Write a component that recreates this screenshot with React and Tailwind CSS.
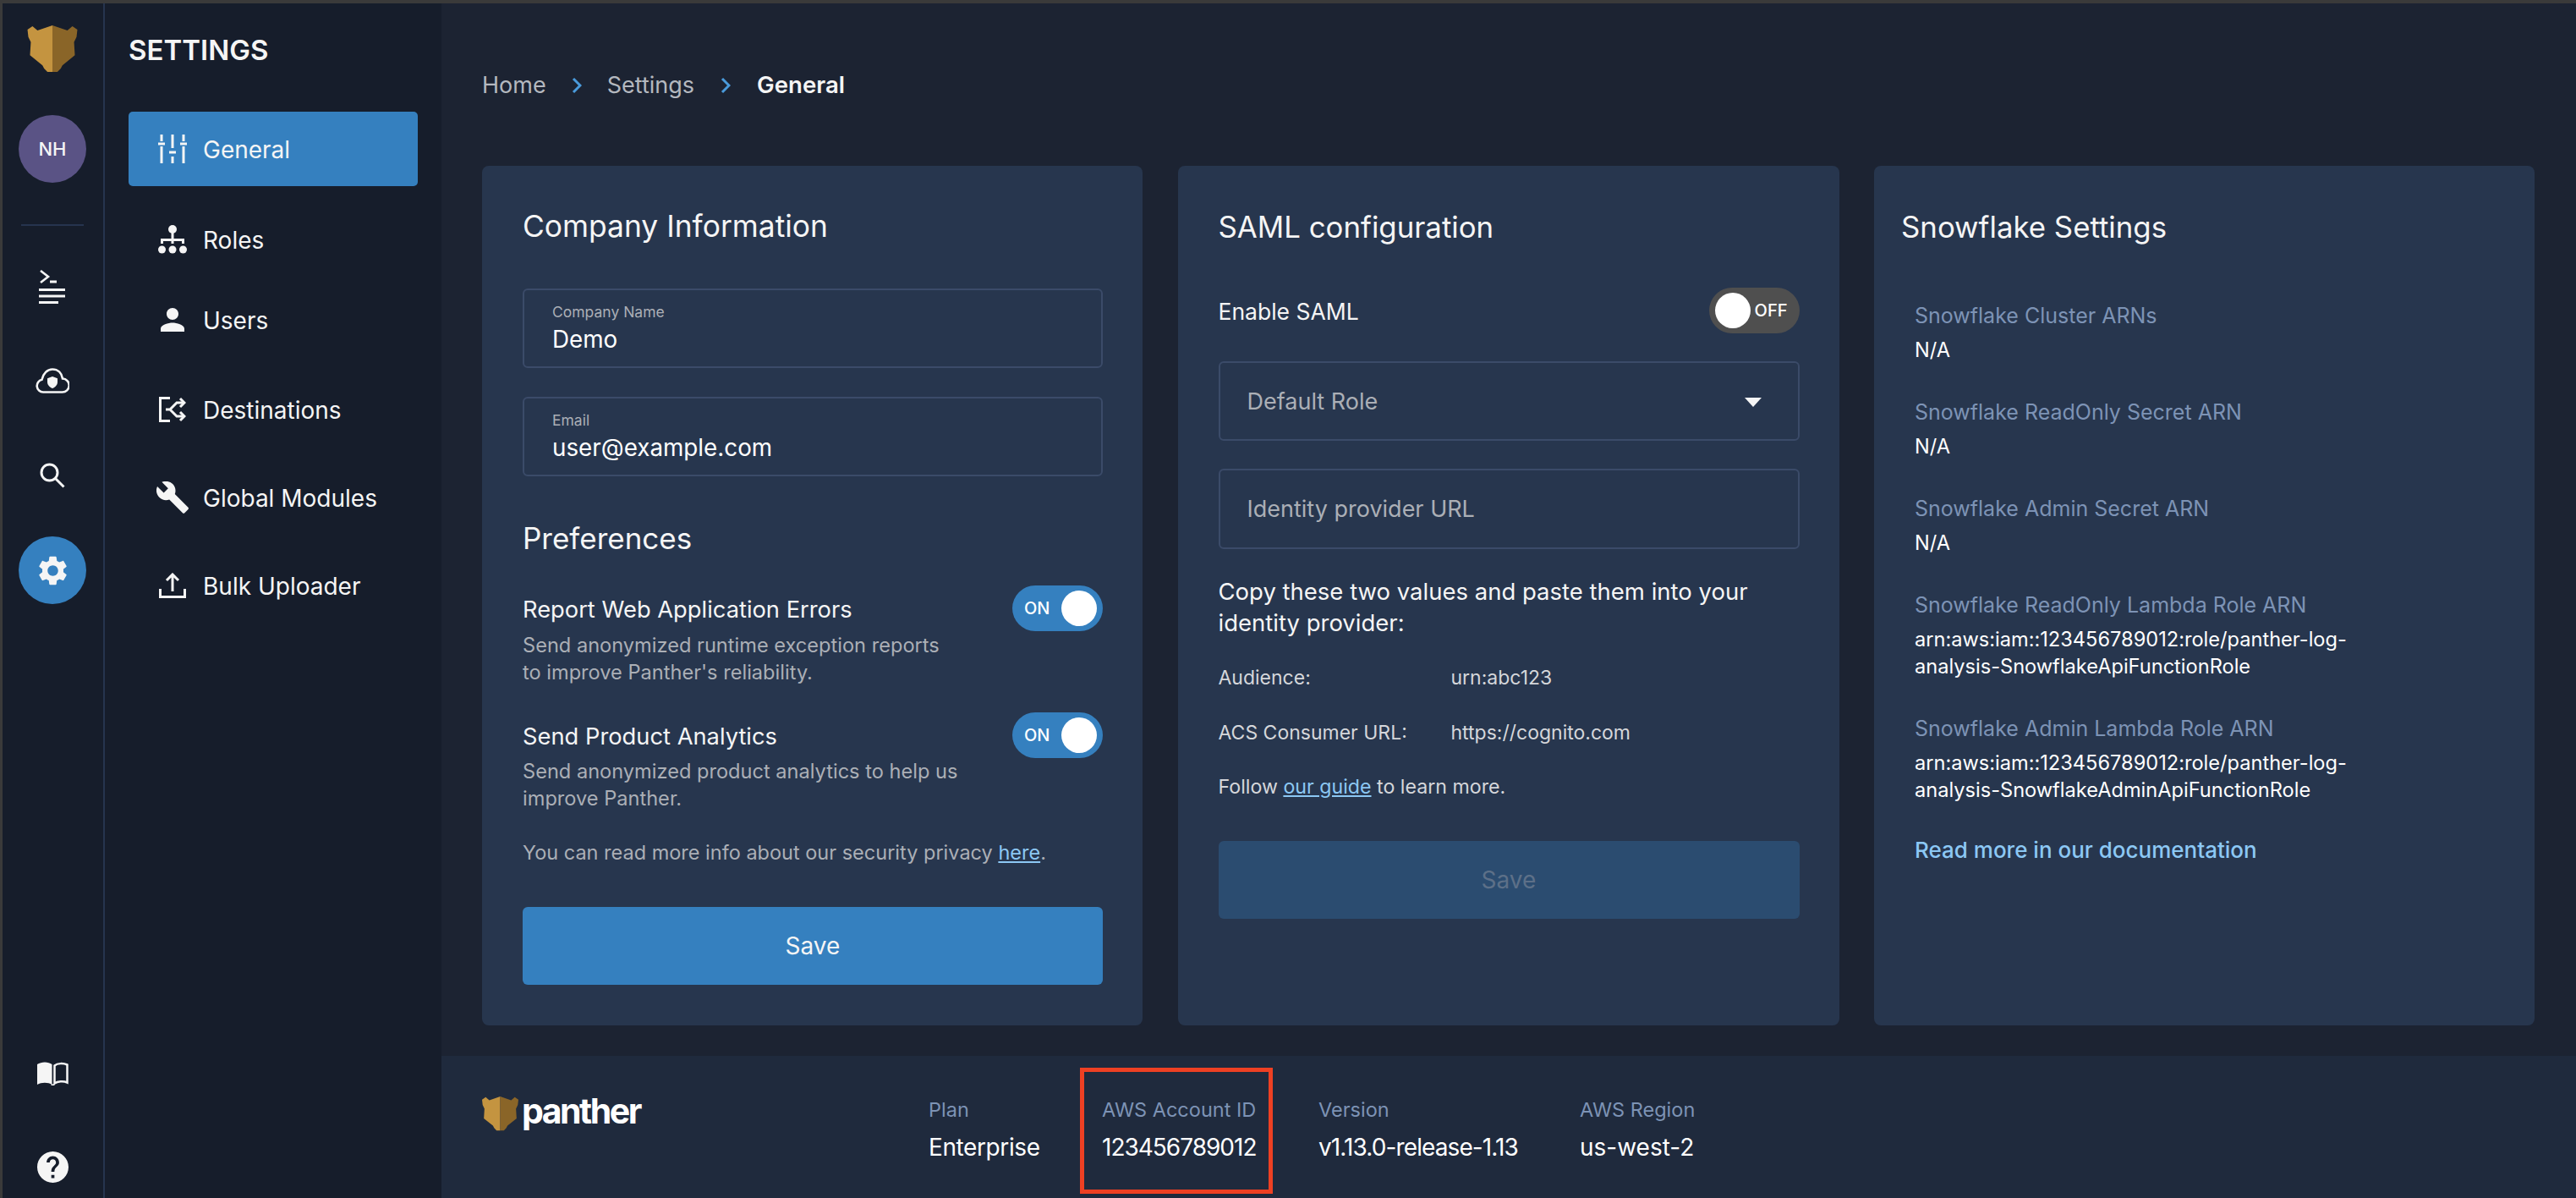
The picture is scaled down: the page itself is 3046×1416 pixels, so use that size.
import React from "react";

const Head = ({ className }) => (
  <svg viewBox="0 0 60 57" className={className}>
    <path d="M30 0 L12 6 L6 1 L0 5 L1 14 L4 20 L3 36 L18 48 L20 52 L24 56 L30 56 Z" fill="#C49440" />
    <path d="M30 0 L48 6 L54 1 L60 5 L59 14 L56 20 L57 36 L42 48 L40 52 L36 56 L30 56 Z" fill="#8A6528" />
  </svg>
);

const Sliders = () => (
  <svg viewBox="0 0 34 34" className="w-[34px] h-[34px] shrink-0" fill="none" stroke="#f5f5f5" strokeWidth="3">
    <path d="M4 0v8M4 14v20M17 0v16M17 26v8M30 0v8M30 14v20" />
    <path d="M0 11h8M13 21h8M26 11h8" />
  </svg>
);
const Roles = () => (
  <svg viewBox="0 0 34 34" className="w-[34px] h-[34px] shrink-0" fill="#f5f5f5">
    <circle cx="17" cy="5" r="5" />
    <circle cx="4.5" cy="29" r="4.5" /><circle cx="17" cy="29" r="4.5" /><circle cx="29.5" cy="29" r="4.5" />
    <path d="M15.5 9h3v7H31v6h-3v-3H18.5v3h-3v-3H6v3H3v-6h12.5z" />
  </svg>
);
const Person = () => (
  <svg viewBox="4 4 16 16" className="w-[28px] h-[28px] shrink-0" fill="#f5f5f5">
    <path d="M12 12c2.21 0 4-1.79 4-4s-1.79-4-4-4-4 1.79-4 4 1.79 4 4 4zm0 2c-2.67 0-8 1.34-8 4v2h16v-2c0-2.66-5.33-4-8-4z" />
  </svg>
);
const Dest = () => (
  <svg viewBox="0 0 32 30" className="w-[32px] h-[30px] shrink-0" fill="none" stroke="#f5f5f5" strokeWidth="3">
    <path d="M13 1.5H1.5v27H13" />
    <path d="M8 15h5l8-8h8M13 15l8 8h8" />
    <path d="M25 2l5 5-5 5M25 18l5 5-5 5" />
  </svg>
);
const Wrench = () => (
  <svg viewBox="1 1.2 22 22" className="w-[38px] h-[38px] shrink-0" fill="#f5f5f5">
    <path d="M22.7 19l-9.1-9.1c.9-2.3.4-5-1.5-6.9-2-2-5-2.4-7.4-1.3L9 6 6 9 1.6 4.7C.4 7.1.9 10.1 2.9 12.1c1.9 1.9 4.6 2.4 6.9 1.5l9.1 9.1c.4.4 1 .4 1.4 0l2.3-2.3c.5-.4.5-1.1.1-1.4z" />
  </svg>
);
const Upload = () => (
  <svg viewBox="0 0 32 30" className="w-[32px] h-[30px] shrink-0" fill="none" stroke="#f5f5f5" strokeWidth="3">
    <path d="M16 22V3M9 9l7-7 7 7" />
    <path d="M1.5 19v9.5h29V19" />
  </svg>
);
const Prompt = () => (
  <svg viewBox="0 0 32 40" className="w-[32px] h-[40px]" fill="none" stroke="#f5f5f5" strokeWidth="3">
    <path d="M2 1l9 7-9 7" strokeWidth="2.6" />
    <path d="M13 14h8M0 23.5h31M0 31h31M0 38.5h23" />
  </svg>
);
const Cloud = () => (
  <svg viewBox="0 0 40 30" className="w-[40px] h-[30px]">
    <path d="M9 28.5a7.5 7.5 0 0 1-1.5-14.8C9 6.5 14 1.5 20 1.5c6.5 0 11 4.5 12 11a8 8 0 0 1-.5 16z" fill="none" stroke="#f5f5f5" strokeWidth="2.6" />
    <path d="M20 10l6 2.2v4.3c0 3.6-2.6 6.2-6 7.5-3.4-1.3-6-3.9-6-7.5v-4.3z" fill="#f5f5f5" />
  </svg>
);
const Search = () => (
  <svg viewBox="0 0 30 30" className="w-[30px] h-[30px]" fill="none" stroke="#f5f5f5" strokeWidth="3">
    <circle cx="11.5" cy="11.5" r="9.5" />
    <path d="M18.5 18.5L28.5 28.5" />
  </svg>
);
const Gear = () => (
  <svg viewBox="2.5 2 19 20" className="w-[33px] h-[35px]" fill="#f5f5f5">
    <path d="M19.14 12.94c.04-.3.06-.61.06-.94 0-.32-.02-.64-.07-.94l2.03-1.58c.18-.14.23-.41.12-.61l-1.92-3.32c-.12-.22-.37-.29-.59-.22l-2.39.96c-.5-.38-1.03-.7-1.62-.94l-.36-2.54c-.04-.24-.24-.41-.48-.41h-3.84c-.24 0-.43.17-.47.41l-.36 2.54c-.59.24-1.13.57-1.62.94l-2.39-.96c-.22-.08-.47 0-.59.22L2.74 8.87c-.12.21-.08.47.12.61l2.03 1.58c-.05.3-.09.63-.09.94s.02.64.07.94l-2.03 1.58c-.18.14-.23.41-.12.61l1.92 3.32c.12.22.37.29.59.22l2.39-.96c.5.38 1.03.7 1.62.94l.36 2.54c.05.24.24.41.48.41h3.84c.24 0 .44-.17.47-.41l.36-2.54c.59-.24 1.13-.56 1.62-.94l2.39.96c.22.08.47 0 .59-.22l1.92-3.32c.12-.22.07-.47-.12-.61l-2.01-1.58zM12 15.6c-1.98 0-3.6-1.62-3.6-3.6s1.62-3.6 3.6-3.6 3.6 1.62 3.6 3.6-1.62 3.6-3.6 3.6z" />
  </svg>
);
const Book = () => (
  <svg viewBox="0 0 37 28" className="w-[37px] h-[28px]">
    <path d="M0 3C5-.5 13-.5 17.5 3v24C13 24 5 24 0 27z" fill="#f5f5f5" />
    <path d="M20.5 4.5C24 1.5 31 1.5 35.5 3.5v21C31 22.5 24 23 20.5 25.5z" fill="none" stroke="#f5f5f5" strokeWidth="2.5" />
    <path d="M17 26.5c1 1.5 2 1.5 3 0" fill="none" stroke="#f5f5f5" strokeWidth="2" />
  </svg>
);
const Help = () => (
  <svg viewBox="2 2 20 20" className="w-[37px] h-[37px]" fill="#f5f5f5">
    <path d="M12 2C6.48 2 2 6.48 2 12s4.48 10 10 10 10-4.48 10-10S17.52 2 12 2zm1 17h-2v-2h2v2zm2.07-7.75l-.9.92C13.45 12.9 13 13.5 13 15h-2v-.5c0-1.1.45-2.1 1.17-2.83l1.24-1.26c.37-.36.59-.86.59-1.41 0-1.1-.9-2-2-2s-2 .9-2 2H8c0-2.21 1.79-4 4-4s4 1.79 4 4c0 .88-.36 1.68-.93 2.25z" />
  </svg>
);
const Chevron = () => (
  <svg viewBox="0 0 12 20" className="w-[12px] h-[20px]" fill="none" stroke="#4A9BDC" strokeWidth="3">
    <path d="M2 2l8 8-8 8" />
  </svg>
);

const NavItem = ({ icon, label, active, mt }) => (
  <div className={`flex items-center h-[88px] w-[342px] rounded-[5px] ${mt} ${active ? "bg-[#3580BF]" : ""}`}>
    <div className="w-[88px] shrink-0 pl-[35px]">
      <div className="w-[34px] flex justify-center">{icon}</div>
    </div>
    <span className="text-[28px] pt-[1px] text-[#f5f5f5]">{label}</span>
  </div>
);

const Field = ({ label, value }) => (
  <div className="h-[94px] rounded-[6px] border-2 border-[#3B4B69] px-[33px] pt-[14px]">
    <div className="text-[17.5px] leading-[24px] text-[#ABAFB6]">{label}</div>
    <div className="text-[27.8px] leading-[36px] text-white mt-[2px]">{value}</div>
  </div>
);

const Toggle = ({ on }) =>
  on ? (
    <div className="w-[107px] h-[54px] rounded-full bg-[#3580BF] flex items-center justify-between pl-[14px] pr-[7px] shrink-0">
      <span className="text-[20px] font-medium text-white">ON</span>
      <span className="w-[42px] h-[42px] rounded-full bg-white" />
    </div>
  ) : (
    <div className="w-[107px] h-[54px] rounded-full bg-[#4F4F4F] flex items-center justify-between pl-[7px] pr-[14px] shrink-0">
      <span className="w-[42px] h-[42px] rounded-full bg-white" />
      <span className="text-[20px] font-medium text-white">OFF</span>
    </div>
  );

const Info = ({ label, children, mt }) => (
  <div className={mt}>
    <div className="text-[25px] leading-[32px] text-[#7D93B5]">{label}</div>
    <div className="text-[23.6px] leading-[32px] text-white mt-[9px]">{children}</div>
  </div>
);

const Stat = ({ label, value, w, track }) => (
  <div className={w}>
    <div className="text-[23.5px] leading-[32px] text-[#7D93B5]">{label}</div>
    <div className={`text-[28px] leading-[36px] text-white mt-[10px] ${track}`}>{value}</div>
  </div>
);

export default function App() {
  return (
    <div className="w-full h-[1416px] flex flex-col overflow-hidden bg-[#3a3a3a] pt-[4px] pl-[3px] font-['Inter',sans-serif]">
      <div className="flex-1 flex min-h-0">
        <aside className="w-[121px] shrink-0 bg-[#161D2B] border-r-2 border-[#26344E] flex flex-col items-center pr-[1px]">
          <Head className="w-[60px] h-[56px] mt-[26px]" />
          <div className="w-[80px] h-[80px] rounded-full bg-[#5A5385] mt-[50px] flex items-center justify-center text-[22px] font-medium text-[#f5f5f5]">NH</div>
          <div className="w-[74px] h-[2px] bg-[#26344E] mt-[49px]" />
          <div className="mt-[52px]"><Prompt /></div>
          <div className="mt-[76px]"><Cloud /></div>
          <div className="mt-[82px]"><Search /></div>
          <div className="w-[80px] h-[80px] rounded-full bg-[#3580BF] mt-[57px] flex items-center justify-center"><Gear /></div>
          <div className="mt-auto"><Book /></div>
          <div className="mt-[78px] mb-[18px]"><Help /></div>
        </aside>

        <nav className="w-[398px] shrink-0 bg-[#161D2B] pl-[28px]">
          <div className="text-[33px] leading-[44px] font-semibold text-[#f5f5f5] mt-[33px]">SETTINGS</div>
          <NavItem active label="General" icon={<Sliders />} mt="mt-[51px]" />
          <NavItem label="Roles" icon={<Roles />} mt="mt-[19px]" />
          <NavItem label="Users" icon={<Person />} mt="mt-[7px]" />
          <NavItem label="Destinations" icon={<Dest />} mt="mt-[18px]" />
          <NavItem label="Global Modules" icon={<Wrench />} mt="mt-[16px]" />
          <NavItem label="Bulk Uploader" icon={<Upload />} mt="mt-[16px]" />
        </nav>

        <main className="flex-1 min-w-0 flex flex-col bg-[#1C2332]">
          <div className="h-[192px] shrink-0 flex items-center pl-[48px] pt-[2px] text-[27px] text-[#B4B8BF]">
            <span>Home</span>
            <span className="mx-[30px]"><Chevron /></span>
            <span>Settings</span>
            <span className="mx-[31px]"><Chevron /></span>
            <span className="text-[27.6px] font-semibold text-[#f5f5f5]">General</span>
          </div>

          <div className="flex-1 min-h-0 grid grid-cols-[781px_782px_781px] gap-x-[41.5px] pl-[48px] pr-[49px] pb-[36px]">
            <section className="bg-[#27364E] rounded-[8px] pl-[48px] pr-[47px] pt-[48px]">
              <h2 className="text-[35.4px] leading-[48px] text-[#f5f5f5]">Company Information</h2>
              <div className="mt-[49px]"><Field label="Company Name" value="Demo" /></div>
              <div className="mt-[34px]"><Field label="Email" value="user@example.com" /></div>
              <h2 className="text-[35px] leading-[48px] text-[#f5f5f5] mt-[49px]">Preferences</h2>
              <div className="flex justify-between mt-[32px]">
                <div className="pt-[11px]">
                  <div className="text-[27.3px] leading-[36px] text-[#f5f5f5]">Report Web Application Errors</div>
                  <div className="text-[23.6px] leading-[32px] text-[#ABAFB6] mt-[8px]">Send anonymized runtime exception reports<br />to improve Panther's reliability.</div>
                </div>
                <Toggle on />
              </div>
              <div className="flex justify-between mt-[31px]">
                <div className="pt-[11px]">
                  <div className="text-[27.3px] leading-[36px] text-[#f5f5f5]">Send Product Analytics</div>
                  <div className="text-[23.6px] leading-[32px] text-[#ABAFB6] mt-[7px]">Send anonymized product analytics to help us<br />improve Panther.</div>
                </div>
                <Toggle on />
              </div>
              <div className="text-[23.5px] leading-[32px] text-[#ABAFB6] mt-[32px]">
                You can read more info about our security privacy <span className="text-[#8CC8F4] underline">here</span>.
              </div>
              <div className="mt-[48px] h-[92px] rounded-[6px] bg-[#3580BF] flex items-center justify-center text-[28px] text-[#f5f5f5]">Save</div>
            </section>

            <section className="bg-[#27364E] rounded-[8px] pl-[48px] pr-[47px] pt-[48px]">
              <h2 className="text-[34.8px] leading-[48px] text-[#f5f5f5]">SAML configuration</h2>
              <div className="flex items-center justify-between mt-[48px]">
                <span className="text-[26.5px] pt-[3px] text-[#f5f5f5]">Enable SAML</span>
                <Toggle />
              </div>
              <div className="mt-[33px] h-[94px] rounded-[6px] border-2 border-[#3B4B69] pl-[32px] pr-[33px] pt-[2px] flex items-center justify-between text-[27px] text-[#ABAFB6]">
                <span>Default Role</span>
                <span className="w-0 h-0 border-x-[10px] border-x-transparent border-t-[11px] border-t-[#f5f5f5] mr-[10px]" />
              </div>
              <div className="mt-[33px] h-[95px] rounded-[6px] border-2 border-[#3B4B69] pl-[32px] pt-[2px] flex items-center text-[27px] text-[#ABAFB6]">Identity provider URL</div>
              <div className="mt-[32px] text-[27.5px] leading-[37px] text-[#f5f5f5]">Copy these two values and paste them into your<br />identity provider:</div>
              <div className="mt-[30px] flex text-[23px] leading-[32px] text-[#D5D7DB]">
                <span className="w-[275px]">Audience:</span><span>urn:abc123</span>
              </div>
              <div className="mt-[33px] flex text-[23px] leading-[32px] text-[#D5D7DB]">
                <span className="w-[275px]">ACS Consumer URL:</span><span>https://cognito.com</span>
              </div>
              <div className="mt-[32px] text-[23.2px] leading-[32px] text-[#D5D7DB]">
                Follow <span className="text-[#8CC8F4] underline">our guide</span> to learn more.
              </div>
              <div className="mt-[48px] h-[92px] rounded-[6px] bg-[#2B4C70] flex items-center justify-center text-[28px] text-[#5D7088]">Save</div>
            </section>

            <section className="bg-[#27364E] rounded-[8px] px-[32px] pt-[48px]">
              <h2 className="text-[34.8px] leading-[48px] text-[#f5f5f5]">Snowflake Settings</h2>
              <div className="pl-[16px] mt-[65px]">
                <Info label="Snowflake Cluster ARNs">N/A</Info>
                <Info label="Snowflake ReadOnly Secret ARN" mt="mt-[41px]">N/A</Info>
                <Info label="Snowflake Admin Secret ARN" mt="mt-[41px]">N/A</Info>
                <Info label="Snowflake ReadOnly Lambda Role ARN" mt="mt-[41px]">arn:aws:iam::123456789012:role/panther-log-<br />analysis-SnowflakeApiFunctionRole</Info>
                <Info label="Snowflake Admin Lambda Role ARN" mt="mt-[41px]">arn:aws:iam::123456789012:role/panther-log-<br />analysis-SnowflakeAdminApiFunctionRole</Info>
                <div className="mt-[39px] text-[26px] leading-[32px] font-medium text-[#8CC8F4]">Read more in our documentation</div>
              </div>
            </section>
          </div>

          <footer className="relative h-[168px] shrink-0 bg-[#1F2A3D] flex pl-[48px] pt-[48px]">
            <div className="w-[528px] shrink-0 flex items-start">
              <Head className="w-[43px] h-[41px]" />
              <span className="ml-[4px] text-[41px] leading-[44px] font-bold text-white tracking-[-2.5px] -mt-[5px]">panther</span>
            </div>
            <Stat w="w-[205px] shrink-0" label="Plan" value="Enterprise" track="tracking-[-0.4px]" />
            <Stat w="w-[256px] shrink-0" label="AWS Account ID" value="123456789012" track="tracking-[-1px]" />
            <Stat w="w-[309px] shrink-0" label="Version" value="v1.13.0-release-1.13" track="tracking-[-0.9px]" />
            <Stat w="w-[200px] shrink-0" label="AWS Region" value="us-west-2" />
            <div className="absolute left-[755px] top-[14px] w-[228px] h-[149px] border-[5px] border-[#EE4023]" />
          </footer>
        </main>
      </div>
    </div>
  );
}
